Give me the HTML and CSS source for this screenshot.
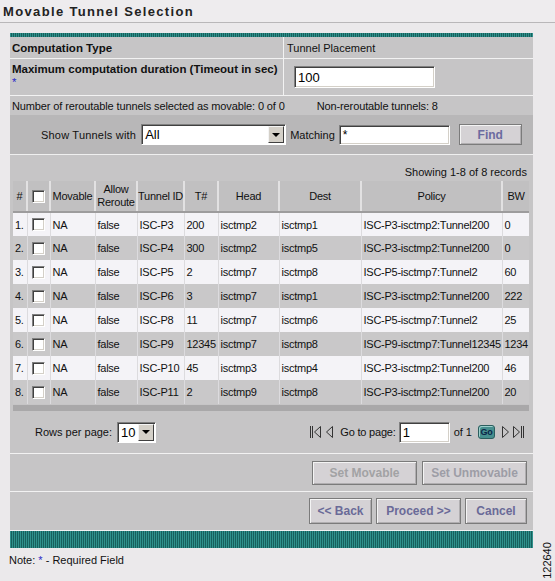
FILE: index.html
```html
<!DOCTYPE html>
<html>
<head>
<meta charset="utf-8">
<title>Movable Tunnel Selection</title>
<link rel="stylesheet" href="styles.css">
</head>
<body>
<div class="title">Movable Tunnel Selection</div>
<div class="panel">
  <div class="stripe thin"></div>
  <div class="frow r1">
    <div class="lab b">Computation Type</div>
    <div class="val">Tunnel Placement</div>
  </div>
  <div class="frow r2">
    <div class="lab b">Maximum computation duration (Timeout in sec)<br><span class="req">*</span></div>
    <div class="val"><span class="field f-timeout">100</span></div>
  </div>
  <div class="frow r3">
    <span class="narrow">Number of reroutable tunnels selected as movable: 0 of 0</span>
    <span class="narrow nonr">Non-reroutable tunnels: 8</span>
  </div>
  <div class="filter">
    <span class="flabel">Show Tunnels with</span>
    <span class="combo c-show"><span class="ctext">All</span><span class="ddbtn"><span class="tri"></span></span></span>
    <span class="flabel m">Matching</span>
    <span class="field f-match">*</span>
    <span class="btn b-find">Find</span>
  </div>
  <div class="showing">Showing 1-8 of 8 records</div>
  <table class="grid">
    <colgroup>
      <col style="width:14px"><col style="width:23px"><col style="width:45px"><col style="width:42px"><col style="width:47px"><col style="width:34px"><col style="width:61px"><col style="width:82px"><col style="width:141px"><col style="width:27px">
    </colgroup>
    <thead>
      <tr>
        <th>#</th><th><span class="cb"></span></th><th>Movable</th><th class="wrap">Allow Reroute</th><th>Tunnel ID</th><th>T#</th><th>Head</th><th>Dest</th><th>Policy</th><th class="last">BW</th>
      </tr>
    </thead>
    <tbody>
      <tr class="odd"><td>1.</td><td class="c"><span class="cb"></span></td><td>NA</td><td>false</td><td>ISC-P3</td><td>200</td><td>isctmp2</td><td>isctmp1</td><td>ISC-P3-isctmp2:Tunnel200</td><td class="last">0</td></tr>
      <tr class="even"><td>2.</td><td class="c"><span class="cb"></span></td><td>NA</td><td>false</td><td>ISC-P4</td><td>300</td><td>isctmp2</td><td>isctmp5</td><td>ISC-P3-isctmp2:Tunnel200</td><td class="last">0</td></tr>
      <tr class="odd"><td>3.</td><td class="c"><span class="cb"></span></td><td>NA</td><td>false</td><td>ISC-P5</td><td>2</td><td>isctmp7</td><td>isctmp8</td><td>ISC-P5-isctmp7:Tunnel2</td><td class="last">60</td></tr>
      <tr class="even"><td>4.</td><td class="c"><span class="cb"></span></td><td>NA</td><td>false</td><td>ISC-P6</td><td>3</td><td>isctmp7</td><td>isctmp1</td><td>ISC-P3-isctmp2:Tunnel200</td><td class="last">222</td></tr>
      <tr class="odd"><td>5.</td><td class="c"><span class="cb"></span></td><td>NA</td><td>false</td><td>ISC-P8</td><td>11</td><td>isctmp7</td><td>isctmp6</td><td>ISC-P5-isctmp7:Tunnel2</td><td class="last">25</td></tr>
      <tr class="even"><td>6.</td><td class="c"><span class="cb"></span></td><td>NA</td><td>false</td><td>ISC-P9</td><td>12345</td><td>isctmp7</td><td>isctmp8</td><td>ISC-P9-isctmp7:Tunnel12345</td><td class="last">1234</td></tr>
      <tr class="odd"><td>7.</td><td class="c"><span class="cb"></span></td><td>NA</td><td>false</td><td>ISC-P10</td><td>45</td><td>isctmp3</td><td>isctmp4</td><td>ISC-P3-isctmp2:Tunnel200</td><td class="last">46</td></tr>
      <tr class="even"><td>8.</td><td class="c"><span class="cb"></span></td><td>NA</td><td>false</td><td>ISC-P11</td><td>2</td><td>isctmp9</td><td>isctmp8</td><td>ISC-P3-isctmp2:Tunnel200</td><td class="last">20</td></tr>
    </tbody>
  </table>
  <div class="bar"></div>
  <div class="pager">
    <div class="rpp">
      <span>Rows per page:</span>
      <span class="combo c-rows"><span class="ctext">10</span><span class="ddbtn"><span class="tri"></span></span></span>
    </div>
    <div class="pnav">
      <svg class="ico first" width="13" height="14" viewBox="0 0 13 14"><path d="M1.5 1v12M3.5 1v12" stroke="#333" stroke-width="1" fill="none"/><path d="M11.5 1.5L5.5 7l6 5.5z" stroke="#333" stroke-width="1" fill="none"/></svg>
      <svg class="ico prev" width="9" height="14" viewBox="0 0 9 14"><path d="M7.5 1.5L1.5 7l6 5.5z" stroke="#333" stroke-width="1" fill="none"/></svg>
      <span class="goto">Go to page:</span>
      <span class="field f-page">1</span>
      <span class="of">of 1</span>
      <span class="gobtn">Go</span>
      <svg class="ico next" width="9" height="14" viewBox="0 0 9 14"><path d="M1.5 1.5L7.5 7l-6 5.5z" stroke="#333" stroke-width="1" fill="none"/></svg>
      <svg class="ico last" width="13" height="14" viewBox="0 0 13 14"><path d="M1.5 1.5L7.5 7l-6 5.5z" stroke="#333" stroke-width="1" fill="none"/><path d="M9.5 1v12M11.5 1v12" stroke="#333" stroke-width="1" fill="none"/></svg>
    </div>
  </div>
  <div class="actions">
    <span class="btn b-set dim">Set Movable</span>
    <span class="btn b-set dim2">Set Unmovable</span>
  </div>
  <div class="nav">
    <span class="btn b-back">&lt;&lt; Back</span>
    <span class="btn b-proc">Proceed &gt;&gt;</span>
    <span class="btn b-cancel">Cancel</span>
  </div>
  <div class="stripe thick"></div>
</div>
<div class="note">Note: <span class="req">*</span> - Required Field</div>
<div class="figno">122640</div>
</body>
</html>
```

FILE: styles.css
```css
* { box-sizing: border-box; }
html, body { margin: 0; padding: 0; }
body {
  width: 555px;
  height: 581px;
  overflow: hidden;
  position: relative;
  background: #ebe9eb;
  font-family: "Liberation Sans", Arial, sans-serif;
  font-size: 11px;
  color: #111;
}
.title {
  height: 23px;
  padding: 4px 0 0 3px;
  border-bottom: 1px solid #b9b7b9;
  font-weight: bold;
  font-size: 13px;
  letter-spacing: 1.35px;
  color: #222;
  background: #eeecee;
}
.panel {
  margin: 10px 0 0 10px;
  width: 523px;
  background: #c6c5c6;
}
.stripe {
  background: repeating-linear-gradient(90deg, #2f918c 0 1px, #17605d 1px 2px);
}
.stripe.thin { height: 4px; }
.stripe.thick { height: 18px; border-top: 1px solid #f2f2f2; }

.frow { display: flex; border-bottom: 1px solid #f2f2f2; }
.lab { width: 274px; padding-left: 2px; border-right: 1px solid #f2f2f2; }
.b { font-weight: bold; font-size: 11.5px; color: #111; }
.val { padding-left: 3px; }
.r1 { height: 22px; }
.r1 .lab, .r1 .val { display: flex; align-items: center; }
.r2 { height: 37px; }
.r2 .lab { padding-top: 4px; line-height: 13px; }
.r2 .val { display: flex; align-items: center; padding-left: 10px; }
.req { color: #2b2bc8; font-weight: normal; }
.r3 { height: 19px; align-items: center; padding-left: 2px; border-bottom: none; }
.narrow { letter-spacing: -0.12px; }
.nonr { margin-left: 32px; }

.field {
  display: inline-flex;
  align-items: center;
  background: #fff;
  border: 1px solid;
  border-color: #808080 #ffffff #ffffff #808080;
  box-shadow: inset 1px 1px 0 #404040, inset -1px -1px 0 #d4d0c8;
  padding-left: 3px;
  font-size: 13px;
  color: #000;
}
.f-timeout { width: 141px; height: 22px; }
.f-match { width: 111px; height: 20px; font-size: 12px; align-items: flex-start; padding-top: 2px; }
.f-page { width: 51px; height: 21px; font-size: 13px; }

.filter {
  height: 40px;
  background: #b8b7b8;
  border-bottom: 1px solid #efefef;
  display: flex;
  align-items: center;
  padding-left: 31px;
}
.flabel { font-size: 11px; letter-spacing: 0.2px; margin-right: 5px; }
.flabel.m { margin-left: 4px; margin-right: 4px; letter-spacing: 0; }

.combo {
  display: inline-flex;
  align-items: stretch;
  background: #fff;
  border: 1px solid;
  border-color: #808080 #ffffff #ffffff #808080;
  box-shadow: inset 1px 1px 0 #404040;
  padding: 1px;
}
.ctext { flex: 1; padding-left: 2px; font-size: 13px; line-height: 17px; color: #000; }
.c-show { width: 145px; height: 21px; }
.c-rows { width: 39px; height: 21px; margin-left: 5px; }
.ddbtn {
  width: 16px;
  background: #d4d0c8;
  border: 1px solid;
  border-color: #f4f4f4 #404040 #404040 #f4f4f4;
  display: flex;
  align-items: center;
  justify-content: center;
}
.tri {
  width: 0; height: 0;
  border-left: 4px solid transparent;
  border-right: 4px solid transparent;
  border-top: 4px solid #000;
}

.btn {
  display: inline-flex;
  align-items: center;
  justify-content: center;
  height: 24px;
  background: #d5d2d5;
  border: 1px solid #7b7b7b;
  box-shadow: inset 1px 1px 0 #f4f4f4, inset -1px -1px 0 #b0aeb0;
  font-weight: bold;
  font-size: 12px;
  color: #6a6a98;
}
.b-find { width: 63px; height: 21px; margin-left: 9px; color: #6b6ba0; }

.showing {
  height: 26px;
  display: flex;
  justify-content: flex-end;
  align-items: flex-end;
  padding: 0 6px 3px 0;
}

.grid {
  margin-left: 3px;
  width: 516px;
  table-layout: fixed;
  border-collapse: collapse;
  letter-spacing: -0.25px;
}
.grid th {
  height: 31px;
  background: #c1c0c1;
  border-right: 2px solid #e2e1e2;
  border-bottom: 2px solid #9d9c9d;
  font-weight: normal;
  text-align: center;
  line-height: 13px;
  padding: 0;
  color: #111;
  white-space: nowrap;
}
.grid th.wrap { white-space: normal; }
.grid th.last, .grid td.last { border-right: none; }
.grid td {
  height: 24px;
  padding: 0 0 0 2px;
  border-right: 1px solid #dcdbde;
  white-space: nowrap;
  overflow: hidden;
  color: #111;
}
.grid td.c { text-align: center; padding: 0; }
.grid tr.odd td { background: #f4f3f7; }
.grid tr.even td { background: #c9c8c9; }
.cb {
  display: inline-block;
  width: 13px;
  height: 13px;
  vertical-align: middle;
  background: #fff;
  border: 1px solid;
  border-color: #808080 #ffffff #ffffff #808080;
  box-shadow: inset 1px 1px 0 #404040, inset -1px -1px 0 #d4d0c8;
}

.bar { height: 6px; margin: 1px 4px 0 3px; background: #a9a8a9; }

.pager {
  height: 43px;
  border-bottom: 1px solid #f2f2f2;
  display: flex;
  align-items: center;
  justify-content: space-between;
  padding: 0 8px 0 25px;
}
.rpp { display: flex; align-items: center; }
.pnav { display: flex; align-items: center; }
.ico { display: block; }
.ico.prev { margin-left: 3px; }
.goto { margin-left: 6px; margin-right: 3px; letter-spacing: -0.2px; }
.of { margin-left: 4px; }
.gobtn {
  margin-left: 6px;
  width: 17px;
  height: 14px;
  border-radius: 3px;
  background: #468f8e;
  border: 1px solid #2b5e5e;
  box-shadow: inset 1px 1px 0 #9ccfcc;
  color: #0a2548;
  font-size: 9px;
  font-weight: bold;
  letter-spacing: -0.3px;
  line-height: 12px;
  display: flex;
  align-items: center;
  justify-content: center;
}
.ico.next { margin-left: 6px; }
.ico.last { margin-left: 2px; }

.actions, .nav {
  height: 38px;
  border-bottom: 1px solid #f2f2f2;
  display: flex;
  align-items: center;
  justify-content: flex-end;
  padding-right: 6px;
  gap: 5px;
}
.nav { height: 38px; border-bottom: none; gap: 4px; }
.nav .btn { height: 26px; }
.b-set { width: 105px; }
.dim { color: #a2a2a4; }
.dim2 { color: #9d9da6; }
.b-back { width: 63px; }
.b-proc { width: 85px; }
.b-cancel { width: 62px; }

.note { padding: 5px 0 0 9px; line-height: 14px; font-size: 11px; }

.figno {
  position: absolute;
  left: 527px;
  top: 554px;
  width: 40px;
  height: 13px;
  font-size: 11px;
  line-height: 13px;
  text-align: center;
  transform: rotate(-90deg);
  color: #111;
}
```
